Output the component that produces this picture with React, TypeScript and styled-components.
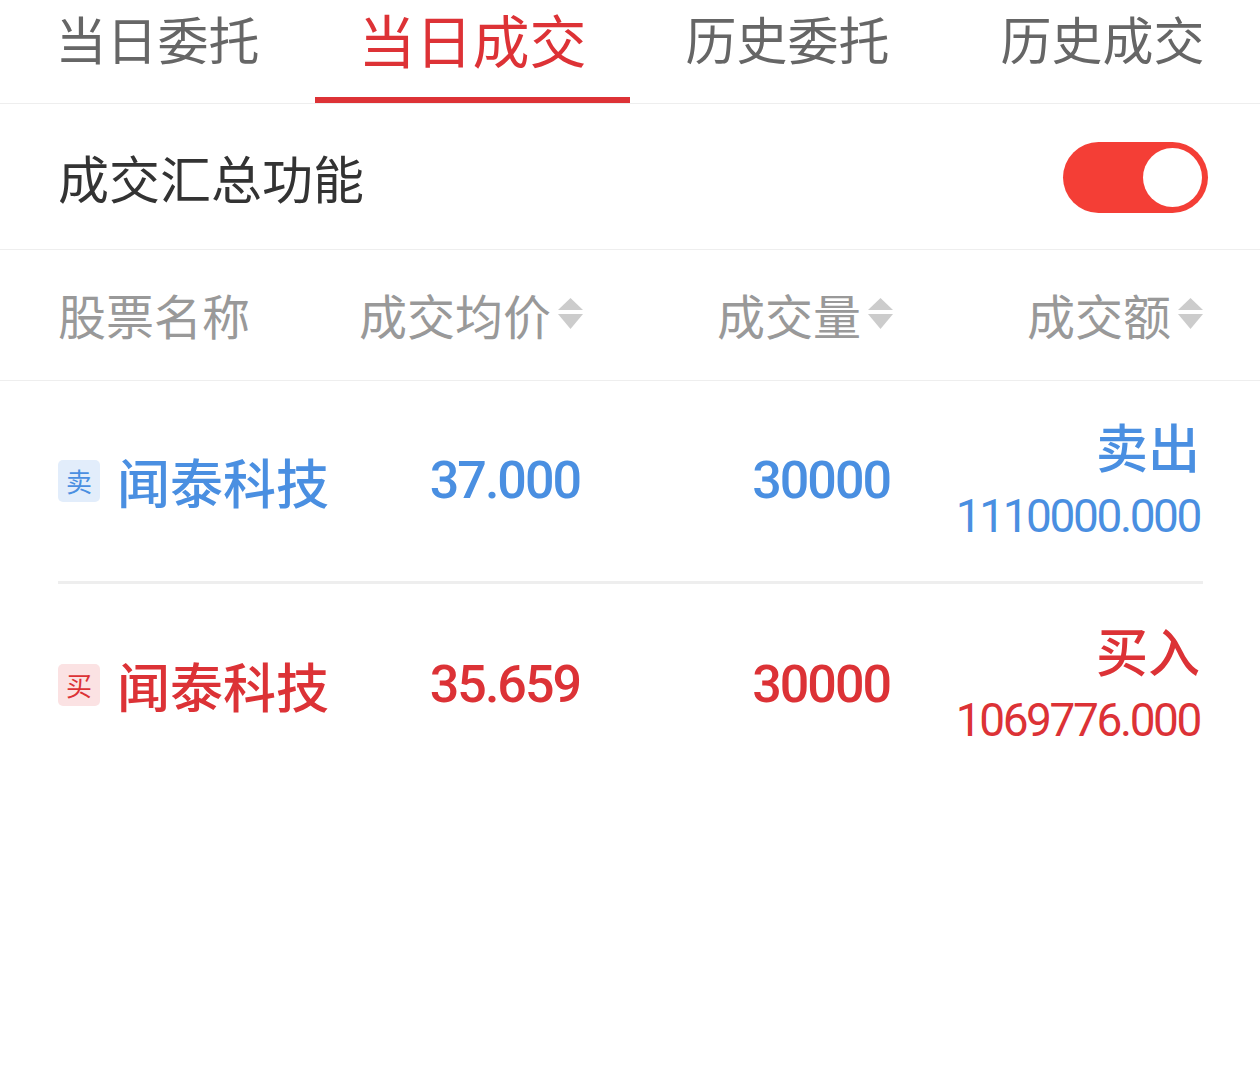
import React from "react";
import styled, { createGlobalStyle } from "styled-components";

const GlobalStyle = createGlobalStyle`
  html, body { margin: 0; padding: 0; background: #fff; }
  body { font-family: "Noto Sans CJK SC", "Noto Sans", sans-serif; }
  * { box-sizing: border-box; }
`;

const BLUE = "#4a8fe1";
const RED = "#dc3236";

const Page = styled.div`
  width: 1260px;
  min-height: 1069px;
  background: #fff;
`;

const TabBar = styled.div`
  display: flex;
  height: 104px;
  border-bottom: 1px solid #eeeeee;
`;

const Tab = styled.div<{ $active?: boolean }>`
  flex: 1;
  height: 103px;
  display: flex;
  justify-content: center;
  align-items: center;
  padding-bottom: 20px;
  border-bottom: 6px solid ${(p) => (p.$active ? "#dd3236" : "transparent")};
  color: ${(p) => (p.$active ? "#dd3236" : "#666666")};
  font-size: ${(p) => (p.$active ? "57px" : "51px")};
  line-height: 1.2;
`;

const SwitchRow = styled.div`
  display: flex;
  align-items: center;
  justify-content: space-between;
  height: 146px;
  padding: 2px 52px 0 58px;
  border-bottom: 1px solid #eeeeee;
`;

const SwitchLabel = styled.span`
  font-size: 51px;
  color: #333333;
  line-height: 1.2;
`;

const Toggle = styled.div<{ $on?: boolean }>`
  width: 145px;
  height: 71px;
  border-radius: 36px;
  background: ${(p) => (p.$on ? "#f43e36" : "#dddddd")};
  display: flex;
  align-items: center;
  justify-content: ${(p) => (p.$on ? "flex-end" : "flex-start")};
  padding: 0 6px;
`;

const Knob = styled.div`
  width: 59px;
  height: 59px;
  border-radius: 50%;
  background: #fff;
`;

const Grid = styled.div`
  display: grid;
  grid-template-columns: 300px 225px 310px 310px;
  align-items: center;
`;

const HeaderRow = styled(Grid)`
  height: 131px;
  padding: 0 57px 0 58px;
  border-bottom: 1px solid #eeeeee;
`;

const HeadCell = styled.div<{ $right?: boolean }>`
  display: flex;
  align-items: center;
  justify-content: ${(p) => (p.$right ? "flex-end" : "flex-start")};
  gap: 7px;
  font-size: 48px;
  color: #999999;
  line-height: 1;
  padding-bottom: 2px;
`;

const SortIcon = () => (
  <svg width="25" height="32" viewBox="0 0 25 32">
    <polygon points="0,12 12.5,0 25,12" fill="#cccccc" />
    <polygon points="0,16 25,16 12.5,31" fill="#cccccc" />
  </svg>
);

const Body = styled.div`
  padding: 0 57px 0 58px;
`;

const DataRow = styled(Grid)<{ $last?: boolean }>`
  height: ${(p) => (p.$last ? "202px" : "203px")};
  border-bottom: ${(p) => (p.$last ? "none" : "3px solid #eeeeee")};
`;

const NameCell = styled.div`
  display: flex;
  align-items: center;
  gap: 17px;
`;

const Badge = styled.span<{ $sell?: boolean }>`
  width: 42px;
  height: 42px;
  border-radius: 5px;
  display: flex;
  align-items: center;
  justify-content: center;
  font-size: 26px;
  line-height: 1;
  background: ${(p) => (p.$sell ? "#e2edfb" : "#fbe2e3")};
  color: ${(p) => (p.$sell ? BLUE : RED)};
`;

const Name = styled.span<{ $sell?: boolean }>`
  font-size: 53px;
  line-height: 1;
  font-weight: 500;
  color: ${(p) => (p.$sell ? BLUE : RED)};
`;

const Num = styled.div<{ $sell?: boolean }>`
  text-align: right;
  padding-right: 3px;
  font-family: Roboto, "Liberation Sans", sans-serif;
  font-size: 52px;
  font-weight: 500;
  letter-spacing: -2px;
  line-height: 1;
  color: ${(p) => (p.$sell ? BLUE : RED)};
`;

const AmountCell = styled.div<{ $sell?: boolean }>`
  display: flex;
  flex-direction: column;
  align-items: flex-end;
  padding-right: 3px;
  color: ${(p) => (p.$sell ? BLUE : RED)};
`;

const Direction = styled.span`
  font-size: 52px;
  line-height: 70px;
  font-weight: 500;
  margin-top: -4px;
`;

const Amount = styled.span`
  font-family: Roboto, "Liberation Sans", sans-serif;
  font-size: 46px;
  font-weight: 400;
  letter-spacing: -2.4px;
  line-height: 70px;
  margin-bottom: -4px;
`;

type Trade = {
  side: "sell" | "buy";
  name: string;
  price: string;
  qty: string;
  amount: string;
};

const trades: Trade[] = [
  { side: "sell", name: "闻泰科技", price: "37.000", qty: "30000", amount: "1110000.000" },
  { side: "buy", name: "闻泰科技", price: "35.659", qty: "30000", amount: "1069776.000" },
];

const tabs = ["当日委托", "当日成交", "历史委托", "历史成交"];

export default function App() {
  return (
    <Page>
      <GlobalStyle />
      <TabBar>
        {tabs.map((t, i) => (
          <Tab key={t} $active={i === 1}>
            {t}
          </Tab>
        ))}
      </TabBar>
      <SwitchRow>
        <SwitchLabel>成交汇总功能</SwitchLabel>
        <Toggle $on>
          <Knob />
        </Toggle>
      </SwitchRow>
      <HeaderRow>
        <HeadCell>股票名称</HeadCell>
        <HeadCell $right>
          成交均价
          <SortIcon />
        </HeadCell>
        <HeadCell $right>
          成交量
          <SortIcon />
        </HeadCell>
        <HeadCell $right>
          成交额
          <SortIcon />
        </HeadCell>
      </HeaderRow>
      <Body>
        {trades.map((t, i) => {
          const sell = t.side === "sell";
          return (
            <DataRow key={i} $last={i === trades.length - 1}>
              <NameCell>
                <Badge $sell={sell}>{sell ? "卖" : "买"}</Badge>
                <Name $sell={sell}>{t.name}</Name>
              </NameCell>
              <Num $sell={sell}>{t.price}</Num>
              <Num $sell={sell}>{t.qty}</Num>
              <AmountCell $sell={sell}>
                <Direction>{sell ? "卖出" : "买入"}</Direction>
                <Amount>{t.amount}</Amount>
              </AmountCell>
            </DataRow>
          );
        })}
      </Body>
    </Page>
  );
}
